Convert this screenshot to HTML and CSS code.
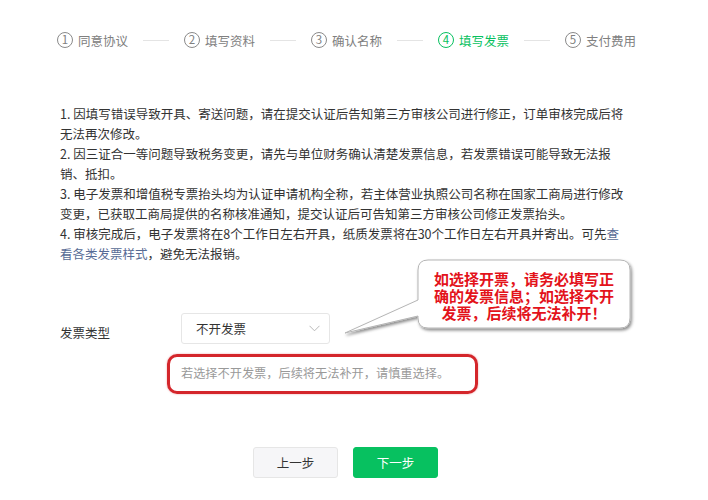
FILE: index.html
```html
<!DOCTYPE html>
<html lang="zh-CN">
<head>
<meta charset="utf-8">
<title>填写发票</title>
<link rel="stylesheet" href="styles.css">
</head>
<body>
<div class="page">
  <div class="steps">
    <div class="step"><span class="num">1</span><span>同意协议</span></div>
    <span class="sep"></span>
    <div class="step"><span class="num">2</span><span>填写资料</span></div>
    <span class="sep"></span>
    <div class="step"><span class="num">3</span><span>确认名称</span></div>
    <span class="sep"></span>
    <div class="step active"><span class="num">4</span><span>填写发票</span></div>
    <span class="sep"></span>
    <div class="step"><span class="num">5</span><span>支付费用</span></div>
  </div>

  <div class="notes">
    <p>1. 因填写错误导致开具、寄送问题，请在提交认证后告知第三方审核公司进行修正，订单审核完成后将无法再次修改。</p>
    <p>2. 因三证合一等问题导致税务变更，请先与单位财务确认清楚发票信息，若发票错误可能导致无法报销、抵扣。</p>
    <p>3. 电子发票和增值税专票抬头均为认证申请机构全称，若主体营业执照公司名称在国家工商局进行修改变更，已获取工商局提供的名称核准通知，提交认证后可告知第三方审核公司修正发票抬头。</p>
    <p>4. 审核完成后，电子发票将在8个工作日左右开具，纸质发票将在30个工作日左右开具并寄出。可先<a class="link" href="#">查看各类发票样式</a>，避免无法报销。</p>
  </div>

  <div class="form-row">
    <div class="label">发票类型</div>
    <div class="select">
      <span>不开发票</span>
      <svg class="chev" width="11" height="7" viewBox="0 0 11 7"><path d="M0.5 0.8 L5.5 5.8 L10.5 0.8" fill="none" stroke="#b8b8b8" stroke-width="1"/></svg>
    </div>
  </div>
  <div class="hint">
    若选择不开发票，后续将无法补开，请慎重选择。
    <span class="redbox"></span>
  </div>

  <div class="actions">
    <button class="btn prev">上一步</button>
    <button class="btn next">下一步</button>
  </div>

  <div class="callout">
    <svg class="bubble" width="300" height="90" viewBox="0 0 300 90">
      <defs>
        <filter id="sh" x="-10%" y="-20%" width="130%" height="150%">
          <feDropShadow dx="1.5" dy="2" stdDeviation="1.6" flood-color="#000" flood-opacity="0.45"/>
        </filter>
      </defs>
      <path d="M88 5 H280 Q290 5 290 15 V63 Q290 73 280 73 H88 Q78 73 78 63 V61 L5 78 L78 45 V15 Q78 5 88 5 Z" fill="#fff" stroke="#b5b5b5" stroke-width="1" filter="url(#sh)"/>
    </svg>
    <div class="callout-text">如选择开票，请务必填写正<br>确的发票信息；如选择不开<br>发票，后续将无法补开！</div>
  </div>
</div>
</body>
</html>
```
FILE: styles.css
```css
* { box-sizing: border-box; }

body {
  margin: 0;
  background: #fff;
  font-family: "Noto Sans CJK SC", "Noto Sans", sans-serif;
  color: #333;
}

.page {
  position: relative;
  width: 708px;
  height: 500px;
  overflow: hidden;
}

.steps {
  display: flex;
  align-items: center;
  padding: 31px 0 0 57px;
  height: 49px;
}

.step {
  display: flex;
  align-items: center;
  gap: 5px;
  font-size: 12.5px;
  line-height: 17px;
  color: #808080;
}

.num {
  width: 16px;
  height: 16px;
  border: 1px solid #8a8a8a;
  border-radius: 50%;
  display: flex;
  align-items: center;
  justify-content: center;
  font-size: 11.5px;
  line-height: 1;
}

.step.active { color: #07c160; }
.step.active .num { border-color: #07c160; }

.sep {
  width: 26px;
  height: 1px;
  background: #e4e4e4;
  margin: 0 15px;
}

.notes {
  margin-top: 55px;
  padding-left: 60px;
  width: 627px;
  font-size: 12.5px;
  line-height: 20px;
  color: #333;
}

.notes p { margin: 0; }

.link {
  color: #576b95;
  text-decoration: none;
}

.form-row {
  display: flex;
  margin-top: 49px;
  padding-left: 60px;
}

.label {
  width: 121px;
  font-size: 12.5px;
  line-height: 31px;
  padding-top: 4px;
  color: #333;
}

.select {
  width: 149px;
  height: 31px;
  border: 1px solid #e6e6e6;
  border-radius: 3px;
  display: flex;
  align-items: center;
  justify-content: space-between;
  padding: 0 9px 0 14px;
  font-size: 12.5px;
  color: #333;
}

.chev { display: block; }

.hint {
  position: relative;
  margin: 15px 0 0 181px;
  width: 290px;
  font-size: 12.2px;
  line-height: 20px;
  color: #999;
}

.redbox {
  position: absolute;
  left: -14px;
  top: -9px;
  width: 311px;
  height: 40px;
  border: 3px solid #d4262b;
  border-radius: 10px;
  box-shadow: 0 0 2px rgba(210, 30, 40, 0.45);
}

.actions {
  display: flex;
  gap: 15px;
  margin-top: 64px;
  padding-left: 253px;
}

.btn {
  width: 85px;
  height: 31px;
  border-radius: 3px;
  font-family: inherit;
  font-size: 12.5px;
  cursor: pointer;
}

.btn.prev {
  background: #f6f6f8;
  border: 1px solid #e6e6e6;
  color: #333;
}

.btn.next {
  background: #07c160;
  border: 1px solid #07c160;
  color: #fff;
}

.callout {
  position: absolute;
  left: 340px;
  top: 255px;
  width: 300px;
  height: 90px;
}

.bubble {
  position: absolute;
  left: 0;
  top: 0;
}

.callout-text {
  position: absolute;
  left: 78px;
  top: 15px;
  width: 212px;
  text-align: center;
  font-size: 15px;
  font-weight: bold;
  line-height: 17px;
  color: #e3131b;
}
```
